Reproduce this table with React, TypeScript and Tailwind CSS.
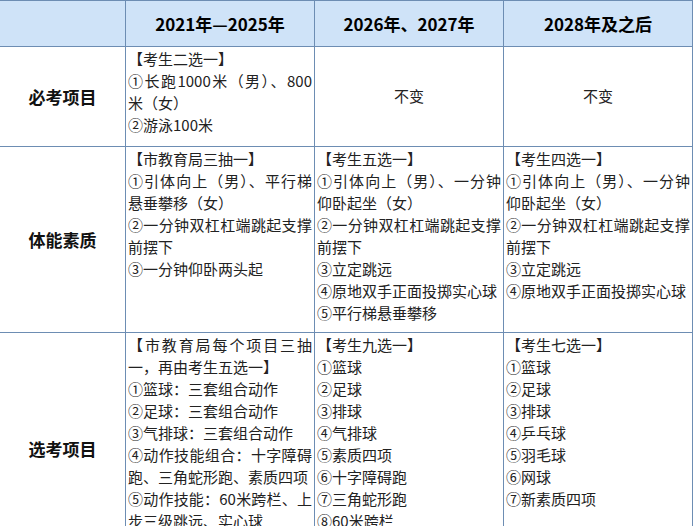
const font = { fontFamily: '"Noto Sans CJK SC", "Noto Sans", sans-serif' }

type Row = {
  label: string
  height: string
  cells: (string[] | null)[]
}

const rows: Row[] = [
  {
    label: '必考项目',
    height: 'h-[99px]',
    cells: [
      ['【考生二选一】', '①长跑1000米（男）、800米（女）', '②游泳100米'],
      null,
      null,
    ],
  },
  {
    label: '体能素质',
    height: 'h-[185px]',
    cells: [
      [
        '【市教育局三抽一】',
        '①引体向上（男）、平行梯悬垂攀移（女）',
        '②一分钟双杠杠端跳起支撑前摆下',
        '③一分钟仰卧两头起',
      ],
      [
        '【考生五选一】',
        '①引体向上（男）、一分钟仰卧起坐（女）',
        '②一分钟双杠杠端跳起支撑前摆下',
        '③立定跳远',
        '④原地双手正面投掷实心球',
        '⑤平行梯悬垂攀移',
      ],
      [
        '【考生四选一】',
        '①引体向上（男）、一分钟仰卧起坐（女）',
        '②一分钟双杠杠端跳起支撑前摆下',
        '③立定跳远',
        '④原地双手正面投掷实心球',
      ],
    ],
  },
  {
    label: '选考项目',
    height: 'h-[232px]',
    cells: [
      [
        '【市教育局每个项目三抽一，再由考生五选一】',
        '①篮球：三套组合动作',
        '②足球：三套组合动作',
        '③气排球：三套组合动作',
        '④动作技能组合：十字障碍跑、三角蛇形跑、素质四项',
        '⑤动作技能：60米跨栏、上步三级跳远、实心球',
      ],
      [
        '【考生九选一】',
        '①篮球',
        '②足球',
        '③排球',
        '④气排球',
        '⑤素质四项',
        '⑥十字障碍跑',
        '⑦三角蛇形跑',
        '⑧60米跨栏',
        '⑨上步三级跳远',
      ],
      [
        '【考生七选一】',
        '①篮球',
        '②足球',
        '③排球',
        '④乒乓球',
        '⑤羽毛球',
        '⑥网球',
        '⑦新素质四项',
      ],
    ],
  },
]

const headers = ['2021年—2025年', '2026年、2027年', '2028年及之后']

export default function App() {
  return (
    <div className="w-[693px] bg-white" style={font}>
      <div className="grid grid-cols-[125px_188px_188px_188px] gap-px bg-[#6d8db3] pt-px pr-px">
        {/* header */}
        <div className="h-[45px] bg-[#cfe3f8]" />
        {headers.map((h) => (
          <div
            key={h}
            className="flex h-[45px] items-center justify-center bg-[#cfe3f8] text-[17px] font-bold text-black"
          >
            {h}
          </div>
        ))}

        {rows.map((row) => (
          <div key={row.label} className="contents">
            <div
              className={`flex ${row.height} items-center justify-center bg-white text-[17px] font-bold text-[#111]`}
            >
              {row.label}
            </div>
            {row.cells.map((cell, i) =>
              cell ? (
                <div
                  key={i}
                  className={`${row.height} overflow-hidden bg-white pt-px pr-[2px] pl-[2px] text-[15px] leading-[22px] text-[#222]`}
                >
                  {cell.map((line) => (
                    <div key={line} className="text-justify">
                      {line}
                    </div>
                  ))}
                </div>
              ) : (
                <div
                  key={i}
                  className={`flex ${row.height} items-center justify-center bg-white text-[15px] text-[#222]`}
                >
                  不变
                </div>
              )
            )}
          </div>
        ))}
      </div>
    </div>
  )
}
